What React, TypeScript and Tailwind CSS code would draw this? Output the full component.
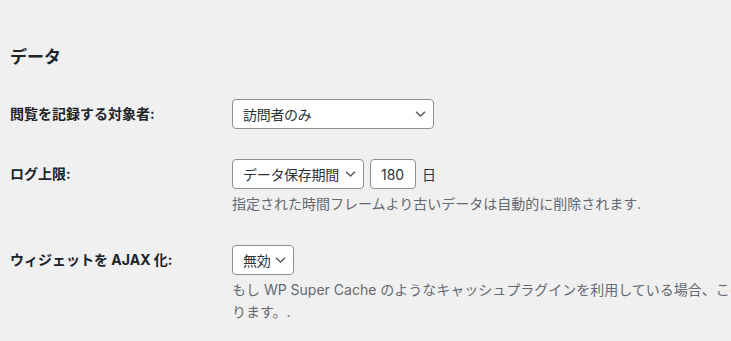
const font = { fontFamily: 'Inter, "Noto Sans CJK JP", sans-serif' };

function Chevron() {
  return (
    <svg width="11" height="6" viewBox="0 0 11 6" className="shrink-0">
      <path d="M1 0.8 L5.5 5 L10 0.8" fill="none" stroke="#50575e" strokeWidth="1.4" />
    </svg>
  );
}

function Select({ label, width }: { label: string; width: string }) {
  return (
    <div
      className={`flex h-[30px] items-center justify-between gap-[4px] rounded-[4px] border border-[#8c8f94] bg-white pl-[10px] pr-[7px] text-[14px] text-[#2c3338] ${width}`}
    >
      <span className="whitespace-nowrap tracking-[-0.3px]">{label}</span>
      <Chevron />
    </div>
  );
}

export default function App() {
  return (
    <main className="min-h-[341px] w-full overflow-hidden bg-[#f0f0f1] text-[#1d2327]" style={font}>
      <div className="w-[1100px] pl-[10px]">
        <h2 className="pt-[45px] text-[17px] font-bold leading-[24px]">データ</h2>

        <div className="mt-[15px]">
          <div className="flex">
            <div className="w-[222px] shrink-0 pt-[20px] text-[14px] font-bold leading-[20px]">閲覧を記録する対象者:</div>
            <div className="py-[15px]">
              <Select label="訪問者のみ" width="w-[202px]" />
            </div>
          </div>

          <div className="flex">
            <div className="w-[222px] shrink-0 pt-[20px] text-[14px] font-bold leading-[20px]">ログ上限:</div>
            <div className="py-[15px]">
              <div className="flex items-center">
                <Select label="データ保存期間" width="w-[132px]" />
                <div className="ml-[6px] flex h-[30px] w-[46px] items-center rounded-[4px] border border-[#8c8f94] bg-white pl-[10px] text-[14px] text-[#2c3338]">
                  180
                </div>
                <span className="ml-[6px] text-[14px] text-[#2c3338]">日</span>
              </div>
              <p className="mt-[4px] text-[14px] leading-[22px] text-[#646970]">
                指定された時間フレームより古いデータは自動的に削除されます.
              </p>
            </div>
          </div>

          <div className="flex">
            <div className="w-[222px] shrink-0 pt-[20px] text-[14px] font-bold leading-[20px]">ウィジェットを AJAX 化:</div>
            <div className="py-[15px]">
              <Select label="無効" width="w-[62px]" />
              <p className="mt-[4px] whitespace-nowrap text-[14px] leading-[22px] text-[#646970]">
                もし WP Super Cache のようなキャッシュプラグインを利用している場合、このオプションを有効にする必要があ
                <br />
                ります。.
              </p>
            </div>
          </div>
        </div>
      </div>
    </main>
  );
}
